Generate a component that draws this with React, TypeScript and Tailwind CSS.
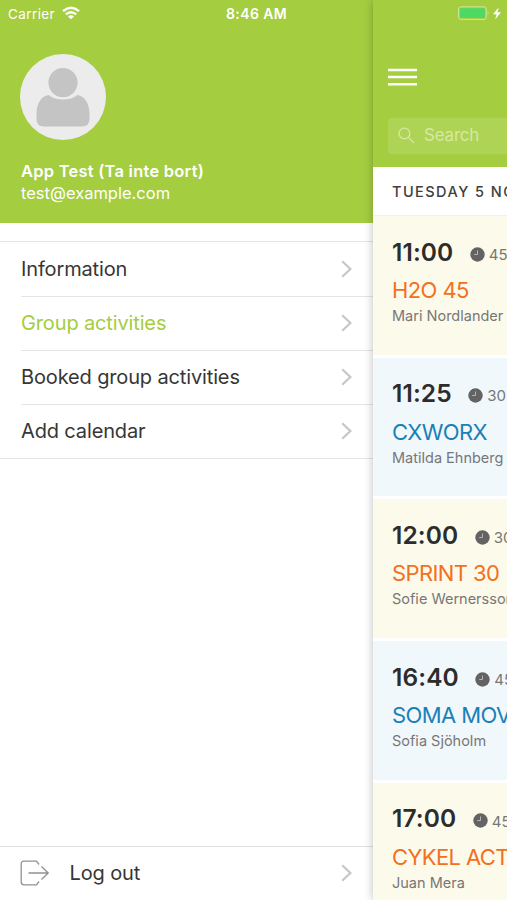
interface Session {
  time: string;
  duration: string;
  title: string;
  trainer: string;
  warm: boolean;
}

const menuItems = [
  { label: "Information", active: false },
  { label: "Group activities", active: true },
  { label: "Booked group activities", active: false },
  { label: "Add calendar", active: false },
];

const sessions: Session[] = [
  { time: "11:00", duration: "45", title: "H2O 45", trainer: "Mari Nordlander", warm: true },
  { time: "11:25", duration: "30", title: "CXWORX", trainer: "Matilda Ehnberg", warm: false },
  { time: "12:00", duration: "30", title: "SPRINT 30", trainer: "Sofie Wernersson", warm: true },
  { time: "16:40", duration: "45", title: "SOMA MOV", trainer: "Sofia Sjöholm", warm: false },
  { time: "17:00", duration: "45", title: "CYKEL ACT", trainer: "Juan Mera", warm: true },
];

function Chevron() {
  return (
    <svg width="11" height="18" viewBox="0 0 11 18" fill="none" stroke="#c7c7c9" strokeWidth="2.2">
      <path d="M1.2 1.2 L9.4 9 L1.2 16.8" />
    </svg>
  );
}

function StatusBar() {
  return (
    <div className="pointer-events-none absolute inset-x-0 top-0 z-20 h-7 text-white">
      <span className="absolute left-[8px] top-[4px] text-[13.5px] leading-5 tracking-[0.4px]">Carrier</span>
      <svg className="absolute left-[62px] top-[6px]" width="18" height="14" viewBox="0 0 18 14" fill="none" stroke="white" strokeWidth="2.3">
        <path d="M1 5.2 Q9 -1.6 17 5.2" />
        <path d="M3.8 8.4 Q9 4 14.2 8.4" />
        <path d="M9 13.2 L6 10.4 Q9 8 12 10.4 Z" fill="white" stroke="none" />
      </svg>
      <span className="absolute left-[226px] top-[4px] whitespace-nowrap text-[14px] font-semibold leading-5 tracking-[0.4px]">
        8:46 AM
      </span>
      <svg className="absolute left-[458px] top-[6px]" width="46" height="15" viewBox="0 0 46 15">
        <rect x="0.6" y="0.8" width="27.6" height="12.6" rx="2.2" fill="none" stroke="#cfe69a" strokeWidth="1" />
        <rect x="2" y="2.2" width="24.8" height="9.8" rx="1" fill="#4cd964" />
        <path d="M29.6 5 Q31.6 7 29.6 9 Z" fill="#cfe69a" />
        <path d="M40.8 1.2 L35 8.2 H38.6 L37.2 13.6 L43 6.2 H39.4 Z" fill="white" />
      </svg>
    </div>
  );
}

function Avatar() {
  return (
    <svg width="86" height="86" viewBox="0 0 86 86">
      <circle cx="43" cy="43" r="43" fill="#ececec" />
      <path
        d="M28.5 41 C21 42 16.5 50 16.5 60 V65 Q16.5 72.5 24 72.5 H62 Q69.5 72.5 69.5 65 V60 C69.5 50 65 42 57.5 41 C50 47 36 47 28.5 41 Z"
        fill="#c4c4c4"
      />
      <circle cx="43" cy="28.6" r="16.4" fill="#ececec" />
      <circle cx="43" cy="28.6" r="14.6" fill="#c4c4c4" />
    </svg>
  );
}

function Drawer() {
  return (
    <aside className="flex w-[372.5px] shrink-0 flex-col bg-white">
      <header className="h-[223px] bg-[#a5cd40] pl-5 pt-[54px] text-white">
        <Avatar />
        <p className="ml-[1px] mt-[20px] text-[16.5px] font-semibold leading-[22px] tracking-[0.23px]">
          App Test (Ta inte bort)
        </p>
        <p className="ml-[1px] text-[16.5px] leading-[22px]">test@example.com</p>
      </header>
      <nav className="mt-[18px] border-y border-[#e4e4e4]">
        {menuItems.map((item, i) => (
          <a
            key={item.label}
            className={`ml-[21px] flex h-[54px] items-center justify-between pr-[21px] text-[20px] tracking-[-0.14px] ${
              i > 0 ? "border-t border-[#e4e4e4] pb-px" : ""
            } ${item.active ? "text-[#a5cd40]" : "text-[#363636]"}`}
          >
            {item.label}
            <Chevron />
          </a>
        ))}
      </nav>
      <a className="mt-auto flex h-[54px] items-center border-t border-[#e0e0e0] pb-[2px] pl-5 pr-[21px] text-[20px] tracking-[-0.14px] text-[#363636]">
        <svg width="30" height="26" viewBox="0 0 30 26" fill="none" stroke="#919191" strokeWidth="1.3">
          <path d="M19 4.5 L16.5 1.2 H4 Q1.2 1.2 1.2 4 V22 Q1.2 24.8 4 24.8 H16.5 L19 21.5" />
          <path d="M8.5 13 H28 M21.5 6.5 L28.2 13 L21.5 19.5" />
        </svg>
        <span className="ml-[19.5px] flex-1">Log out</span>
        <Chevron />
      </a>
    </aside>
  );
}

function SessionCard({ time, duration, title, trainer, warm }: Session) {
  return (
    <article
      className={`h-[141.7px] shrink-0 whitespace-nowrap border-b-[3px] border-white pl-[19.5px] pt-[20px] ${
        warm ? "bg-[#fcfaea]" : "bg-[#f0f8fc]"
      }`}
    >
      <div className="flex h-[32px] items-center">
        <span className="text-[24.5px] font-semibold tracking-[0.1px] text-[#2c2c2c]">{time}</span>
        <svg className="ml-[16.5px] mt-[4px] shrink-0" width="15" height="15" viewBox="0 0 15 15">
          <circle cx="7.5" cy="7.5" r="7.2" fill="#636363" />
          <path d="M7.5 3.5 V7.5 H4.2" fill="none" stroke="#b5b5b5" strokeWidth="1" />
        </svg>
        <span className="ml-[4px] mt-[6px] text-[15px] text-[#777777]">{duration}</span>
      </div>
      <h3
        className={`mt-[7px] text-[22px] leading-[30px] tracking-[-0.6px] ${
          warm ? "text-[#f37021]" : "text-[#1c7fb6]"
        }`}
      >
        {title}
      </h3>
      <p className="mt-[1px] text-[14.5px] leading-[20px] text-[#777777]">{trainer}</p>
    </article>
  );
}

function Schedule() {
  return (
    <main className="z-10 flex min-w-0 flex-1 flex-col overflow-hidden bg-white shadow-[0_0_9px_rgba(0,0,0,0.26)]">
      <header className="h-[167px] shrink-0 bg-[#a5cd40] pl-[15.5px] pt-[68px]">
        <svg className="block" width="29" height="18" viewBox="0 0 29 18" stroke="white" strokeWidth="2.6">
          <path d="M0 2 H29 M0 9 H29 M0 16.2 H29" />
        </svg>
        <div className="mt-[31.5px] flex h-[36px] items-center rounded-l bg-[#afd354] pl-[10px] text-[17px] text-[#d5e8a6]">
          <svg width="17" height="17" viewBox="0 0 18 18" fill="none" stroke="#d5e8a6" strokeWidth="1.4">
            <circle cx="6.8" cy="6.8" r="5.7" />
            <path d="M11 11 L17 17" />
          </svg>
          <span className="ml-[9px] tracking-[-0.2px]">Search</span>
        </div>
      </header>
      <h2 className="h-[49px] shrink-0 whitespace-nowrap border-b border-[#f0f0f0] pl-[19.5px] text-[14.5px] font-medium leading-[50px] tracking-[1.45px] text-[#3f3f3f]">
        TUESDAY 5 NOVEMBER
      </h2>
      {sessions.map((session) => (
        <SessionCard key={session.time} {...session} />
      ))}
    </main>
  );
}

export default function App() {
  return (
    <div className="relative flex h-[900px] w-[507px] overflow-hidden font-['Inter',sans-serif]">
      <StatusBar />
      <Drawer />
      <Schedule />
    </div>
  );
}
